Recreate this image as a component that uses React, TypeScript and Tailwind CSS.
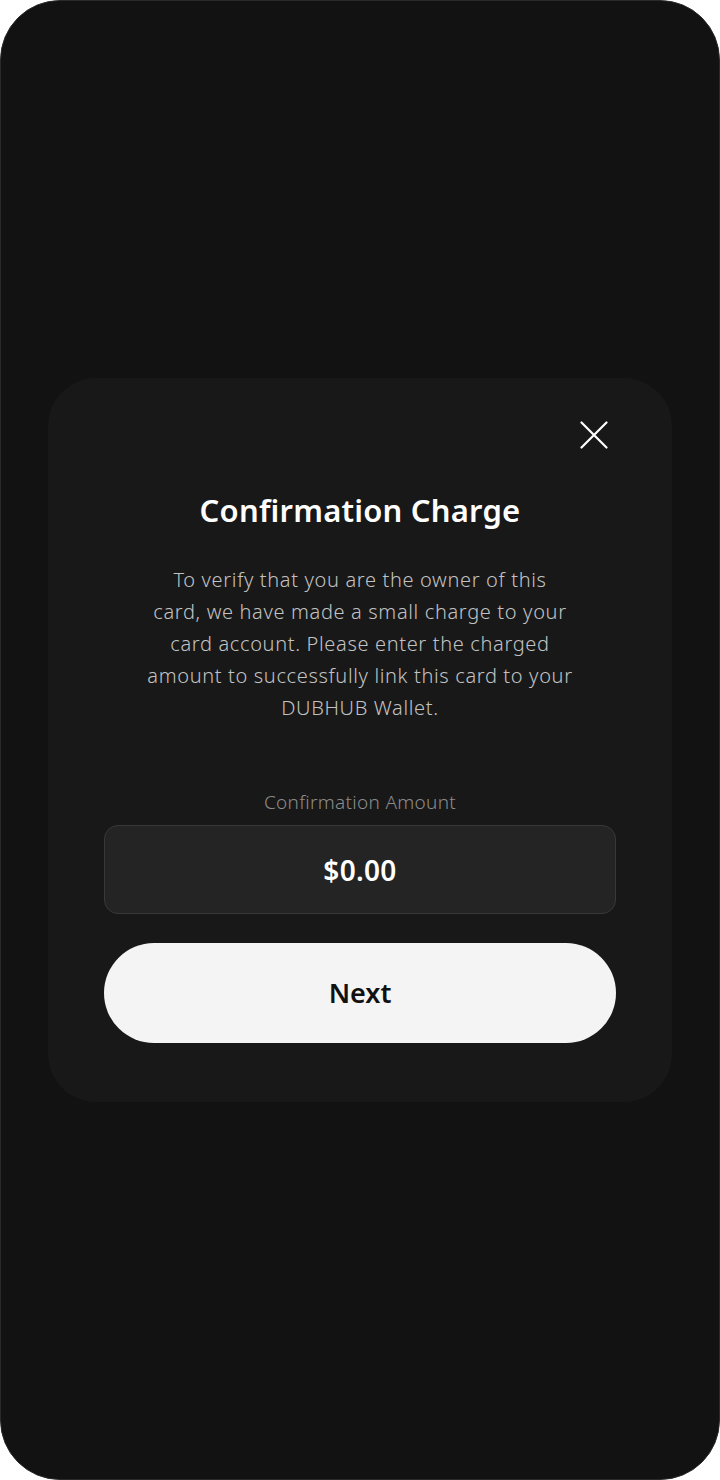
export default function App() {
  return (
    <div className="w-[720px] h-[1480px] bg-white">
      <div
        className="w-full h-full rounded-[60px] border border-[#2a2a2a] bg-[#121212] flex items-center justify-center"
        style={{ fontFamily: '"Noto Sans", "Open Sans", sans-serif' }}
      >
        <div className="w-[624px] rounded-[48px] bg-[#181818] pt-[43px] pb-[59px] px-14 flex flex-col">
          <div className="flex justify-end pr-2">
            <button className="w-7 h-7 text-white">
              <svg viewBox="0 0 28 28" className="w-7 h-7" fill="none" stroke="currentColor" strokeWidth={2.2} strokeLinecap="round">
                <path d="M1.5 1.5 26.5 26.5M26.5 1.5 1.5 26.5" />
              </svg>
            </button>
          </div>

          <h1 className="mt-[41px] text-center text-white text-[31px] leading-[40px] font-semibold tracking-[0.2px]">
            Confirmation Charge
          </h1>

          <p className="mt-[34px] text-center text-[#c2c2c2] text-[20px] leading-8 font-light tracking-[0.65px]">
            To verify that you are the owner of this
            <br />
            card, we have made a small charge to your
            <br />
            card account. Please enter the charged
            <br />
            amount to successfully link this card to your
            <br />
            DUBHUB Wallet.
          </p>

          <label className="mt-[66px] text-center text-[#8c8c8c] text-[19px] leading-6 font-light tracking-[0.3px]">
            Confirmation Amount
          </label>

          <div className="mt-[11px] h-[89px] rounded-[14px] bg-[#242424] border-[1.5px] border-[#383838] flex items-center justify-center">
            <span className="text-white text-[28px] font-semibold tracking-[0.3px]">$0.00</span>
          </div>

          <button className="mt-[29px] h-[100px] rounded-full bg-[#f4f4f4] flex items-center justify-center">
            <span className="text-[#111] text-[27px] font-semibold">Next</span>
          </button>
        </div>
      </div>
    </div>
  );
}
